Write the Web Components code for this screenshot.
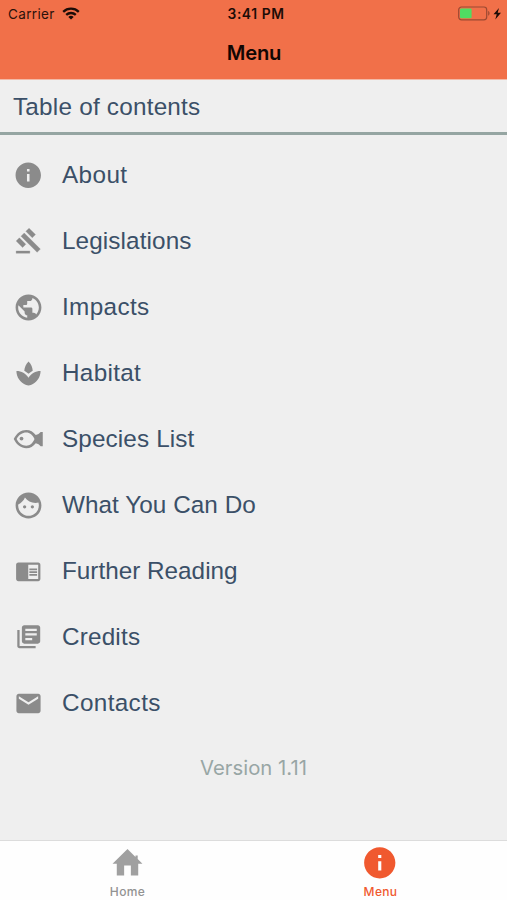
<!DOCTYPE html>
<html lang="en">
<head>
<meta charset="utf-8">
<title>Menu</title>
<style>
html,body{margin:0;height:100%;background:#efefef}
</style>
</head>
<body>
<menu-screen></menu-screen>
<script>
const ICONS = {
  info: '<path d="M12 2C6.48 2 2 6.48 2 12s4.48 10 10 10 10-4.48 10-10S17.52 2 12 2zm1 15h-2v-6h2v6zm0-8h-2V7h2v2z"/>',
  gavel: '<path d="M1 21h12v2H1zM5.245 8.07l2.83-2.827 14.14 14.142-2.828 2.828zM12.317 1l5.657 5.656-2.83 2.83-5.654-5.66zM3.825 9.485l5.657 5.657-2.828 2.828-5.657-5.657z" stroke="currentColor" stroke-width=".25"/>',
  globe: '<path d="M12 2C6.48 2 2 6.48 2 12s4.48 10 10 10 10-4.48 10-10S17.52 2 12 2zm-1 17.93c-3.95-.49-7-3.85-7-7.93 0-.62.08-1.21.21-1.79L9 15v1c0 1.1.9 2 2 2v1.93zm6.9-2.54c-.26-.81-1-1.39-1.9-1.39h-1v-3c0-.55-.45-1-1-1H8v-2h2c.55 0 1-.45 1-1V7h2c1.1 0 2-.9 2-2v-.41c2.93 1.19 5 4.06 5 7.41 0 2.08-.8 3.97-2.1 5.39z"/>',
  spa: '<path d="M15.49 9.63c-.18-2.79-1.31-5.51-3.43-7.63-2.14 2.14-3.32 4.86-3.55 7.63 1.28.68 2.46 1.56 3.49 2.63 1.03-1.06 2.21-1.94 3.49-2.63zM12 15.45C9.85 12.17 6.18 10 2 10c0 5.32 3.36 9.82 8.03 11.49.63.23 1.29.4 1.97.51.68-.12 1.33-.29 1.97-.51C18.64 19.82 22 15.32 22 10c-4.18 0-7.85 2.17-10 5.45z"/>',
  fish: '<path fill-rule="evenodd" d="M.6 12C2.800 7.200 6.600 4.700 10.600 4.700c3.200 0 5.700 1.500 7.600 4 1.700-.3 2.900-1.100 3.900-2.400h1.700v11.400h-1.700c-1-1.300-2.200-2.100-3.900-2.400-1.900 2.500-4.400 4-7.600 4C6.600 19.300 2.800 16.800.6 12zm2.300 0c1.700 3.500 4.600 5.300 7.700 5.300 2.900 0 5.200-1.900 6.600-5.300-1.400-3.400-3.700-5.300-6.600-5.300-3.100 0-6 1.800-7.700 5.300z"/><circle cx="6.800" cy="11.600" r="1.500"/>',
  face: '<path d="M9 11.75c-.69 0-1.25.56-1.25 1.25s.56 1.25 1.25 1.25 1.25-.56 1.25-1.25-.56-1.25-1.25-1.25zm6 0c-.69 0-1.25.56-1.25 1.25s.56 1.25 1.25 1.25 1.25-.56 1.25-1.25-.56-1.25-1.25-1.25zM12 2C6.480 2 2 6.480 2 12s4.480 10 10 10 10-4.480 10-10S17.520 2 12 2zm0 18c-4.410 0-8-3.590-8-8 0-.29.020-.58.050-.86 2.360-1.050 4.230-2.980 5.210-5.370C11.070 8.330 14.050 10 17.420 10c.78 0 1.530-.09 2.250-.26.210.71.330 1.470.330 2.260 0 4.410-3.590 8-8 8z"/>',
  reader: '<path d="M13 12h7v1.500h-7zm0-2.500h7V11h-7zm0 5h7V16h-7zM21 4H3c-1.100 0-2 .9-2 2v13c0 1.100.9 2 2 2h18c1.100 0 2-.9 2-2V6c0-1.100-.9-2-2-2zm0 15h-9V6h9v13z"/>',
  library: '<path d="M4 6H2v14c0 1.100.9 2 2 2h14v-2H4V6zm16-4H8c-1.100 0-2 .9-2 2v12c0 1.100.9 2 2 2h12c1.100 0 2-.9 2-2V4c0-1.100-.9-2-2-2zm-1 9H9V9h10v2zm-4 4H9v-2h6v2zm4-8H9V5h10v2z"/>',
  mail: '<path d="M20 4H4c-1.100 0-1.990.9-1.990 2L2 18c0 1.100.9 2 2 2h16c1.100 0 2-.9 2-2V6c0-1.100-.9-2-2-2zm0 4l-8 5-8-5V6l8 5 8-5v2z"/>',
  home: '<path d="M12 1.600.4 12.900h3.300v9.100h5.700v-7.600h5.200V22h5.700v-9.100h3.300L19.900 9.200V6.600h-1.700v1.100z"/>'
};

function define(name, render) {
  customElements.define(name, class extends HTMLElement {
    connectedCallback() {
      if (!this.shadowRoot) this.attachShadow({mode: 'open'}).innerHTML = render(this);
    }
  });
}

define('ui-icon', el => `
<style>:host{display:block;width:30px;height:30px;flex:none}svg{display:block;width:100%;height:100%;fill:currentColor;overflow:visible}</style>
<svg viewBox="0 0 24 24">${ICONS[el.getAttribute('name')]}</svg>`);

define('status-bar', () => `
<style>
:host{display:grid;grid-template-columns:1fr auto 1fr;align-items:center;height:28px;padding:0 5px 0 8px;font:500 13.500px Inter,sans-serif;color:#2b120b}
.left{display:flex;align-items:center;gap:7px;font-weight:400}
.carrier{letter-spacing:.36px}
.time{font-size:13.800px;line-height:16px;padding-bottom:1px;font-weight:600;letter-spacing:.58px;transform:translateX(1px);color:#1c0c07}
.right{display:flex;justify-content:flex-end;align-items:center}
svg{display:block}
</style>
<div class="left"><span class="carrier">Carrier</span>
<svg width="18" height="14" viewBox="0 0 18 14" fill="none" stroke="#1c0c07" stroke-width="2.300"><path d="M1.200 4.800a11.300 11.300 0 0 1 15.600 0M4.200 7.900a7 7 0 0 1 9.600 0"/><path d="M9 12.600 6.300 9.900a4 4 0 0 1 5.400 0z" fill="#1c0c07" stroke="none"/></svg></div>
<span class="time">3:41 PM</span>
<div class="right"><svg width="44" height="16" viewBox="0 0 44 16"><rect x=".7" y="1" width="28" height="12.800" rx="2.800" fill="none" stroke="#9b4932" stroke-width="1.200"/><rect x="2" y="2.500" width="11.600" height="9.800" rx="1.200" fill="#50dc62"/><path d="M30.200 5.100c1.800.6 1.800 4 0 4.600z" fill="#9b4932"/><path d="M41 1.900 35.500 8.300h3.200l-1.400 5.300L43 6.800h-3.300z" fill="#1c0c07"/></svg></div>`);

define('nav-bar', () => `
<style>
:host{display:block;height:80px;background:#f17049;border-bottom:1px solid #f3b9a6;box-sizing:border-box;flex:none}
h1{margin:0;text-align:center;font:600 20.200px/49px Inter,sans-serif;letter-spacing:-.2px;text-indent:1px;color:#120603}
</style><status-bar></status-bar><h1><slot></slot></h1>`);

define('section-title', () => `
<style>:host{display:block;box-sizing:border-box;height:55px;padding-left:13px;font:24.300px/54px "Liberation Sans",Arial,sans-serif;letter-spacing:.22px;color:#3b5068;border-bottom:3px solid #95a5a2}</style><slot></slot>`);

define('menu-row', el => `
<style>
:host{display:flex;align-items:center;height:66px;padding-left:12.400px;color:#3b5068;font:24.300px/66px "Liberation Sans",Arial,sans-serif}
.pic{width:32px;flex:none;display:flex;justify-content:center;margin-right:17.600px}
ui-icon{color:#8b8b8b;width:${el.getAttribute('size')}px;height:${el.getAttribute('size')}px}
.label{letter-spacing:${el.getAttribute('track')}px}
</style><div class="pic"><ui-icon name="${el.getAttribute('icon')}"></ui-icon></div><span class="label"><slot></slot></span>`);

define('tab-item', el => `
<style>
:host{display:flex;flex:1;flex-direction:column;align-items:center;color:#929292;font:500 12px/16px Inter,sans-serif;letter-spacing:.35px}
:host([active]){color:#f0592f}
.pic{height:43px;display:flex;align-items:center}
ui-icon{width:31px;height:31px;color:#a0a0a0}
:host(:not([active])){padding-left:1px}
:host([active]) ui-icon{width:37.500px;height:37.500px;color:#f0592f}
:host([active]) .pic{height:44px;margin-bottom:-1px;padding-right:1px}
</style><div class="pic"><ui-icon name="${el.getAttribute('icon')}"></ui-icon></div><span><slot></slot></span>`);

define('menu-screen', () => `
<style>
:host{display:flex;flex-direction:column;width:507px;height:900px;background:#efefef;overflow:hidden}
.list{padding-top:7px}
.version{text-align:center;font:400 20.300px/30px Inter,sans-serif;letter-spacing:.02px;color:#98a6a5;margin-top:17px}
.tabs{display:flex;margin-top:auto;height:59px;background:#fefefe;border-top:1px solid #dcdcdc}
</style>
<nav-bar>Menu</nav-bar>
<section-title>Table of contents</section-title>
<div class="list">
<menu-row icon="info" size="30.500" track=".4">About</menu-row>
<menu-row icon="gavel" size="27.400" track=".1">Legislations</menu-row>
<menu-row icon="globe" size="31" track=".35">Impacts</menu-row>
<menu-row icon="spa" size="29" track=".3">Habitat</menu-row>
<menu-row icon="fish" size="30" track=".12">Species List</menu-row>
<menu-row icon="face" size="31" track=".05">What You Can Do</menu-row>
<menu-row icon="reader" size="26.500" track="0">Further Reading</menu-row>
<menu-row icon="library" size="27.500" track=".18">Credits</menu-row>
<menu-row icon="mail" size="29" track=".36">Contacts</menu-row>
</div>
<div class="version">Version 1.11</div>
<div class="tabs"><tab-item icon="home">Home</tab-item><tab-item icon="info" active>Menu</tab-item></div>`);
</script>
</body>
</html>
